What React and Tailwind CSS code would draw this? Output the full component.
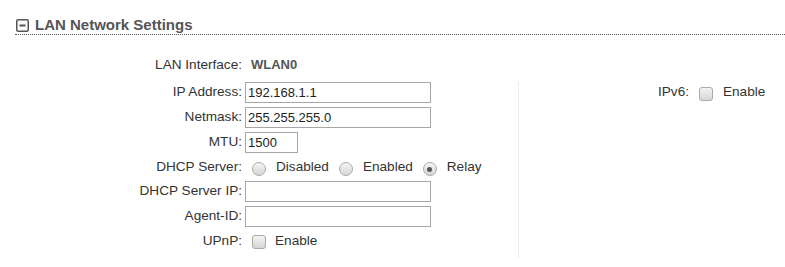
import React from "react";

function Radio({ checked }) {
  return (
    <span className="relative inline-block w-[14px] h-[14px] rounded-full border border-[#a9a9a9] bg-linear-to-b from-[#f4f4f4] to-[#d6d6d6] mt-[5px] shrink-0">
      {checked && (
        <span className="absolute left-[3.5px] top-[3.5px] w-[5px] h-[5px] rounded-full bg-[#555]" />
      )}
    </span>
  );
}

function Check() {
  return (
    <span className="inline-block w-[14px] h-[14px] rounded-[3px] border border-[#a9a9a9] bg-linear-to-b from-[#f4f4f4] to-[#d6d6d6] mt-[2px] shrink-0" />
  );
}

function Field({ value, w = "w-[186px]" }) {
  return (
    <input
      type="text"
      defaultValue={value}
      className={`${w} h-[21px] ml-[3px] border border-[#a6a6a6] px-[2px] text-[13px] text-[#222] bg-white outline-none font-['Liberation_Sans',Arial,sans-serif]`}
    />
  );
}

function Label({ children }) {
  return <div className="w-[242px] text-right shrink-0">{children}</div>;
}

export default function App() {
  return (
    <div className="w-[785px] h-[267px] bg-white font-['Liberation_Sans',Arial,sans-serif] text-[13.6px] text-[#333] overflow-hidden">
      <div className="ml-[15px] h-[35px] pt-[16px] border-b border-dotted border-[#555]">
        <div className="flex items-center h-[18px] pl-[1px] gap-[6px]">
          <svg width="13" height="13" viewBox="0 0 13 13" className="shrink-0">
            <rect x="0.75" y="0.75" width="11.5" height="11.5" rx="1.5" fill="#fafafa" stroke="#555" strokeWidth="1.5" />
            <line x1="3.5" y1="6.5" x2="9.5" y2="6.5" stroke="#555" strokeWidth="2" />
          </svg>
          <span className="text-[15px] font-bold text-[#555] leading-[18px]">LAN Network Settings</span>
        </div>
      </div>

      <div className="pt-[18px] flex items-center h-[42px]">
        <Label>LAN Interface:</Label>
        <span className="ml-[9px] font-bold text-[13px] text-[#555]">WLAN0</span>
      </div>

      <div className="pt-[3px] flex">
        <div className="w-[518px] shrink-0 pb-[4px]">
          <div className="flex items-center h-[25px]">
            <Label>IP Address:</Label>
            <Field value="192.168.1.1" />
          </div>
          <div className="flex items-center h-[25px]">
            <Label>Netmask:</Label>
            <Field value="255.255.255.0" />
          </div>
          <div className="flex items-center h-[25px]">
            <Label>MTU:</Label>
            <Field value="1500" w="w-[53px]" />
          </div>
          <div className="flex items-center h-[24px]">
            <Label>DHCP Server:</Label>
            <span className="ml-[10px] flex items-center">
              <Radio />
              <span className="ml-[10px]">Disabled</span>
            </span>
            <span className="ml-[10px] flex items-center">
              <Radio />
              <span className="ml-[10px]">Enabled</span>
            </span>
            <span className="ml-[10px] flex items-center">
              <Radio checked />
              <span className="ml-[10px]">Relay</span>
            </span>
          </div>
          <div className="flex items-center h-[25px]">
            <Label>DHCP Server IP:</Label>
            <Field value="" />
          </div>
          <div className="flex items-center h-[25px]">
            <Label>Agent-ID:</Label>
            <Field value="" />
          </div>
          <div className="flex items-center h-[24px]">
            <Label>UPnP:</Label>
            <span className="ml-[10px] flex items-center">
              <Check />
            </span>
            <span className="ml-[9px]">Enable</span>
          </div>
        </div>
        <div className="flex-1 mt-[2px] border-l border-dotted border-[#cfe6e6]">
          <div className="flex items-center h-[21px] pl-[139px]">
            <span>IPv6:</span>
            <span className="ml-[10px] flex items-center">
              <Check />
            </span>
            <span className="ml-[10px]">Enable</span>
          </div>
        </div>
      </div>
    </div>
  );
}
